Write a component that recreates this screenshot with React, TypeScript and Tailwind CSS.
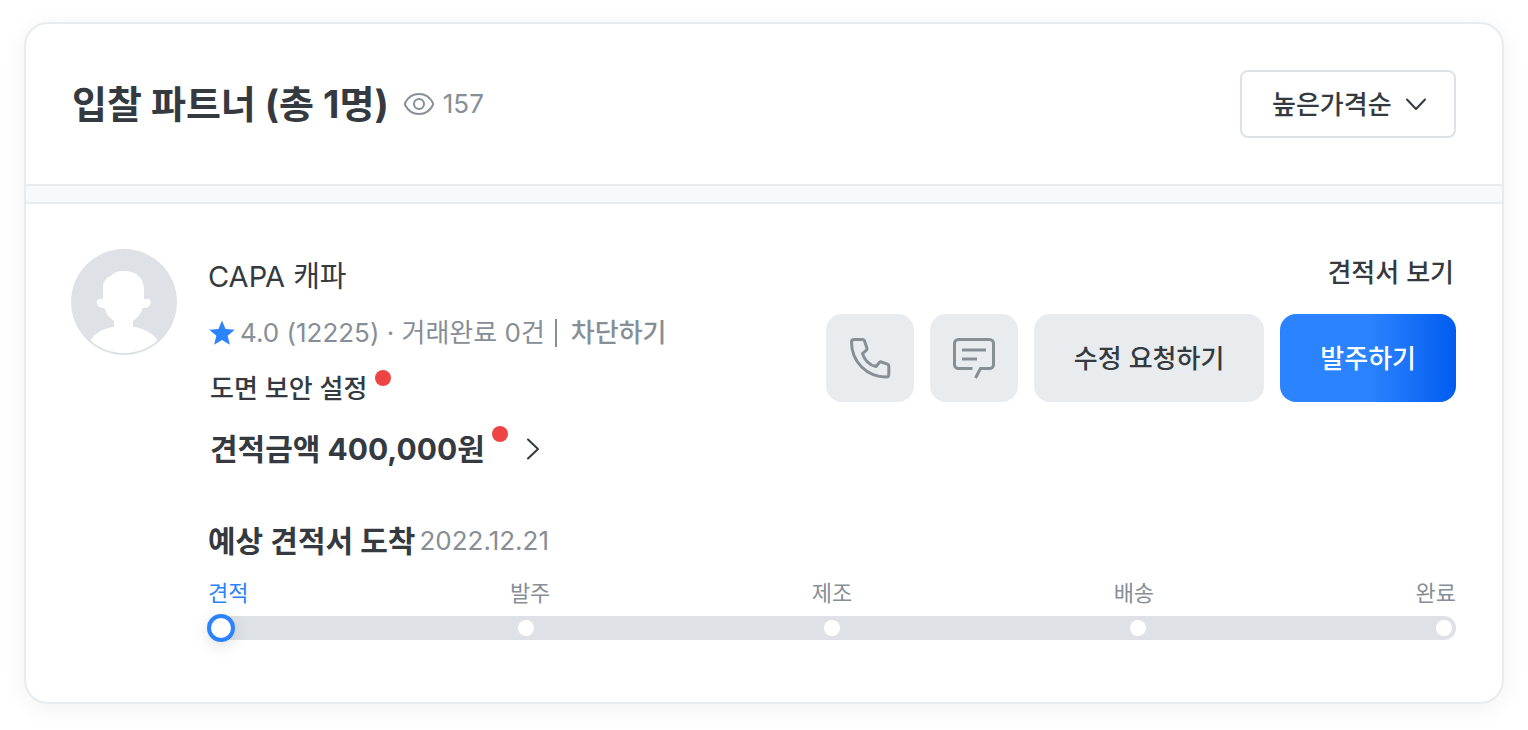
import { useState } from 'react';

const steps = ['견적', '발주', '제조', '배송', '완료'];

const EyeIcon = () => (
  <svg width="32" height="26" viewBox="0 0 32 26" fill="none" stroke="#868e96" strokeWidth="2" aria-hidden="true">
    <path d="M2.200 14.300q-.7-1.300 0-2.600C5.200 6 10 3 16 3s10.800 3 13.800 8.700q.7 1.300 0 2.600C26.800 20 22 23 16 23S5.200 20 2.200 14.300Z" strokeLinejoin="round" />
    <circle cx="16" cy="13" r="5" />
  </svg>
);

const PhoneIcon = () => (
  <svg width="44" height="44" viewBox="0 0 44 44" fill="none" stroke="#868e96" strokeWidth="3" strokeLinejoin="round" aria-hidden="true">
    <path d="M6 3.500H14.500q1.500 0 2 1.400L18.900 12q.4 1.200-.5 2.100l-3.900 3.600C17 25 21 29 28 30.500l3.300-4q.8-.9 2-.5l6.200 2.200q1.300.5 1.300 1.900V38.500q0 2.500-2.500 2.500C19 41 3.500 26 3.500 6 3.500 4.300 4.300 3.500 6 3.500Z" />
  </svg>
);

const MessageIcon = () => (
  <svg width="44" height="44" viewBox="0 0 44 44" fill="none" stroke="#868e96" strokeWidth="3" aria-hidden="true">
    <path d="M20.500 32.500H6.500a4 4 0 0 1-4-4v-21a4 4 0 0 1 4-4h31a4 4 0 0 1 4 4v21a4 4 0 0 1-4 4h-9L23.500 42" />
    <path d="M10 14h24M10 23h15" />
  </svg>
);

const Avatar = () => (
  <svg className="shrink-0" width="106" height="106" viewBox="0 0 106 106" role="img" aria-label="프로필">
    <circle cx="53" cy="53" r="53" fill="#dee2e6" />
    <path
      fill="#fff"
      d="M32 50V38c0-5 3-9 8-11 3-4 8-5 13-5 12 0 20 7 20 18v10h3.500c2 0 3.200 1 3.200 2.800 0 3.700-2.700 6.200-6.700 6.200h-1.500C70 65 66 69 62 72v6c10 1 20 6 24.500 13.500C78 99 66 104 53 104s-25-5-33.500-12.500C24 84 33 79 43 78v-6c-4-3-8-7-9.500-13H32c-4 0-6.200-2.500-6.200-6.200C25.800 51 27 50 29 50Z"
    />
  </svg>
);

export default function App() {
  const [sort, setSort] = useState('high');
  const current = 0;

  return (
    <main className="min-h-screen bg-white px-6 pt-[22px] pb-6 font-['Inter','Noto_Sans_CJK_KR',sans-serif] text-[#343a40]">
      <section className="rounded-3xl border-2 border-[#e9ecef] bg-white shadow-[0_4px_24px_rgba(0,0,0,0.06)]">
        {/* 헤더 */}
        <header className="flex h-40 items-center justify-between px-[46px]">
          <div className="flex items-center gap-[14px]">
            <h1 className="text-[38px] leading-[48px] font-bold">입찰 파트너 (총 1명)</h1>
            <p className="flex items-center gap-2 text-[26px] leading-10 text-[#868e96]">
              <EyeIcon />
              157
            </p>
          </div>
          <div className="relative">
            <select
              aria-label="정렬"
              value={sort}
              onChange={(e) => setSort(e.target.value)}
              className="h-[68px] w-[216px] appearance-none rounded-lg border-2 border-[#dee2e6] bg-white pr-14 pl-[30px] text-[26px] font-medium"
            >
              <option value="high">높은가격순</option>
              <option value="low">낮은가격순</option>
            </select>
            <svg className="pointer-events-none absolute top-7 right-7" width="24" height="14" viewBox="0 0 24 14" fill="none" stroke="#343a40" strokeWidth="2" aria-hidden="true">
              <path d="M3 1.500 12 11l9-9.500" strokeLinecap="round" strokeLinejoin="round" />
            </svg>
          </div>
        </header>

        <div className="h-5 border-y-2 border-[#e9ecef] bg-[#f8f9fb]" />

        {/* 파트너 정보 */}
        <article className="flex gap-[31px] pt-[45px] pr-[46px] pb-[62px] pl-[45px]">
          <Avatar />
          <div className="flex-1">
            <div className="flex items-start justify-between">
              <div className="flex flex-col gap-4 pt-2 text-[26px] leading-10">
                <h2 className="text-[29px]">CAPA 캐파</h2>
                <div className="flex items-center text-[#868e96]">
                  <svg className="mr-1" width="28" height="28" viewBox="0 0 28 28" fill="#2b83ff" aria-hidden="true">
                    <path d="m14 1.500 3.500 8.600 9.200.7-7.100 6 2.300 9L14 20.900l-7.900 4.900 2.300-9-7.100-6 9.200-.7Z" />
                  </svg>
                  <span>4.0 (12225) · 거래완료 0건</span>
                  <span className="mr-[14px] ml-[10px] h-7 w-[2px] bg-[#868e96]" />
                  <button type="button" className="font-medium">차단하기</button>
                </div>
                <div className="flex gap-2 pl-[2px]">
                  <button type="button" className="font-medium">도면 보안 설정</button>
                  <span className="mt-px size-4 rounded-full bg-[#ef4444]" />
                </div>
                <a href="#quote" className="mt-1 flex items-start pl-[2px] text-[30px] font-bold">
                  견적금액 400,000원
                  <span className="ml-[7px] -mt-[3px] size-4 rounded-full bg-[#ef4444]" />
                  <svg className="ml-4 self-center" width="18" height="24" viewBox="0 0 18 24" fill="none" stroke="#343a40" strokeWidth="2" aria-hidden="true">
                    <path d="m4 2.500 10 9.500L4 21.500" strokeLinecap="round" strokeLinejoin="round" />
                  </svg>
                </a>
              </div>

              <div className="flex flex-col items-end gap-[17px] text-[26px] font-medium">
                <a href="#estimate" className="pr-[2px] leading-[48px]">견적서 보기</a>
                <div className="flex gap-4">
                  <button type="button" aria-label="전화" className="flex size-[88px] items-center justify-center rounded-2xl bg-[#e9ecef]">
                    <PhoneIcon />
                  </button>
                  <button type="button" aria-label="메시지" className="flex size-[88px] items-center justify-center rounded-2xl bg-[#e9ecef]">
                    <MessageIcon />
                  </button>
                  <button type="button" className="h-[88px] rounded-2xl bg-[#e9ecef] px-10">수정 요청하기</button>
                  <button type="button" className="h-[88px] rounded-2xl bg-linear-to-r from-[#2b83ff] from-50% to-[#005cf0] px-10 text-white">
                    발주하기
                  </button>
                </div>
              </div>
            </div>

            {/* 진행 단계 */}
            <div className="mt-[52px] flex items-center gap-1 leading-10">
              <h3 className="text-[30px] font-bold">예상 견적서 도착</h3>
              <time dateTime="2022-12-21" className="text-[26px] text-[#868e96]">2022.12.21</time>
            </div>
            <ol className="mt-4 flex justify-between text-[22px] leading-8 text-[#868e96]">
              {steps.map((step, i) => (
                <li key={step} className={i === current ? 'text-[#2b83ff]' : ''}>{step}</li>
              ))}
            </ol>
            <div className="mt-[7px] flex h-6 items-center justify-between rounded-full bg-[#dee2e6] px-1">
              {steps.map((step, i) =>
                i === current ? (
                  <span key={step} className="-mr-[7px] -ml-[5px] size-7 rounded-full border-4 border-[#2b83ff] bg-white shadow-[0_4px_16px_rgba(0,0,0,0.12)]" />
                ) : (
                  <span key={step} className="size-4 rounded-full bg-white" />
                )
              )}
            </div>
          </div>
        </article>
      </section>
    </main>
  );
}
